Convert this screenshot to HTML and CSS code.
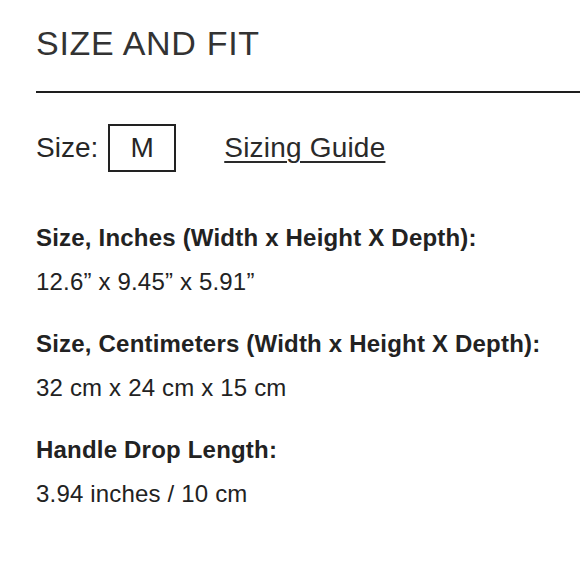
FILE: index.html
```html
<!DOCTYPE html>
<html>
<head>
<meta charset="utf-8">
<link rel="stylesheet" href="styles.css">
</head>
<body>
<div class="panel">
  <h1 class="title">SIZE AND FIT</h1>
  <div class="size-row">
    <span class="size-label">Size:</span>
    <span class="size-box">M</span>
    <a class="guide" href="#">Sizing Guide</a>
  </div>
  <div class="specs">
    <div class="spec">
      <div class="spec-name">Size, Inches (Width x Height X Depth):</div>
      <div class="spec-value">12.6” x 9.45” x 5.91”</div>
    </div>
    <div class="spec">
      <div class="spec-name">Size, Centimeters (Width x Height X Depth):</div>
      <div class="spec-value">32 cm x 24 cm x 15 cm</div>
    </div>
    <div class="spec">
      <div class="spec-name">Handle Drop Length:</div>
      <div class="spec-value">3.94 inches / 10 cm</div>
    </div>
  </div>
</div>
</body>
</html>
```
FILE: styles.css
```css
html, body {
  margin: 0;
  padding: 0;
  background: #ffffff;
}
body {
  font-family: "Liberation Sans", Arial, sans-serif;
  color: #222222;
}
.panel {
  padding: 23px 0 0 36px;
}
.title {
  margin: 0;
  font-size: 34px;
  line-height: 40px;
  font-weight: 400;
  letter-spacing: 0.7px;
  color: #333333;
  padding-bottom: 28px;
  border-bottom: 2px solid #1e1e1e;
}
.size-row {
  display: flex;
  align-items: center;
  margin-top: 31px;
  height: 48px;
  font-size: 28px;
  line-height: 48px;
  color: #262626;
}
.size-label {
  margin-right: 10px;
}
.size-box {
  box-sizing: border-box;
  width: 68px;
  height: 48px;
  border: 2px solid #222222;
  display: flex;
  align-items: center;
  justify-content: center;
  line-height: 44px;
}
.guide {
  margin-left: 48px;
  color: #2a2a2a;
  letter-spacing: 0.2px;
  text-decoration: underline;
  text-decoration-thickness: 1.5px;
  text-underline-offset: 4px;
}
.specs {
  margin-top: 51px;
  display: flex;
  flex-direction: column;
  gap: 32px;
}
.spec {
  display: flex;
  flex-direction: column;
  gap: 14px;
  font-size: 24px;
  line-height: 30px;
}
.spec-name {
  font-weight: 700;
  letter-spacing: 0.2px;
}
.spec-value {
  letter-spacing: 0.18px;
}
```
